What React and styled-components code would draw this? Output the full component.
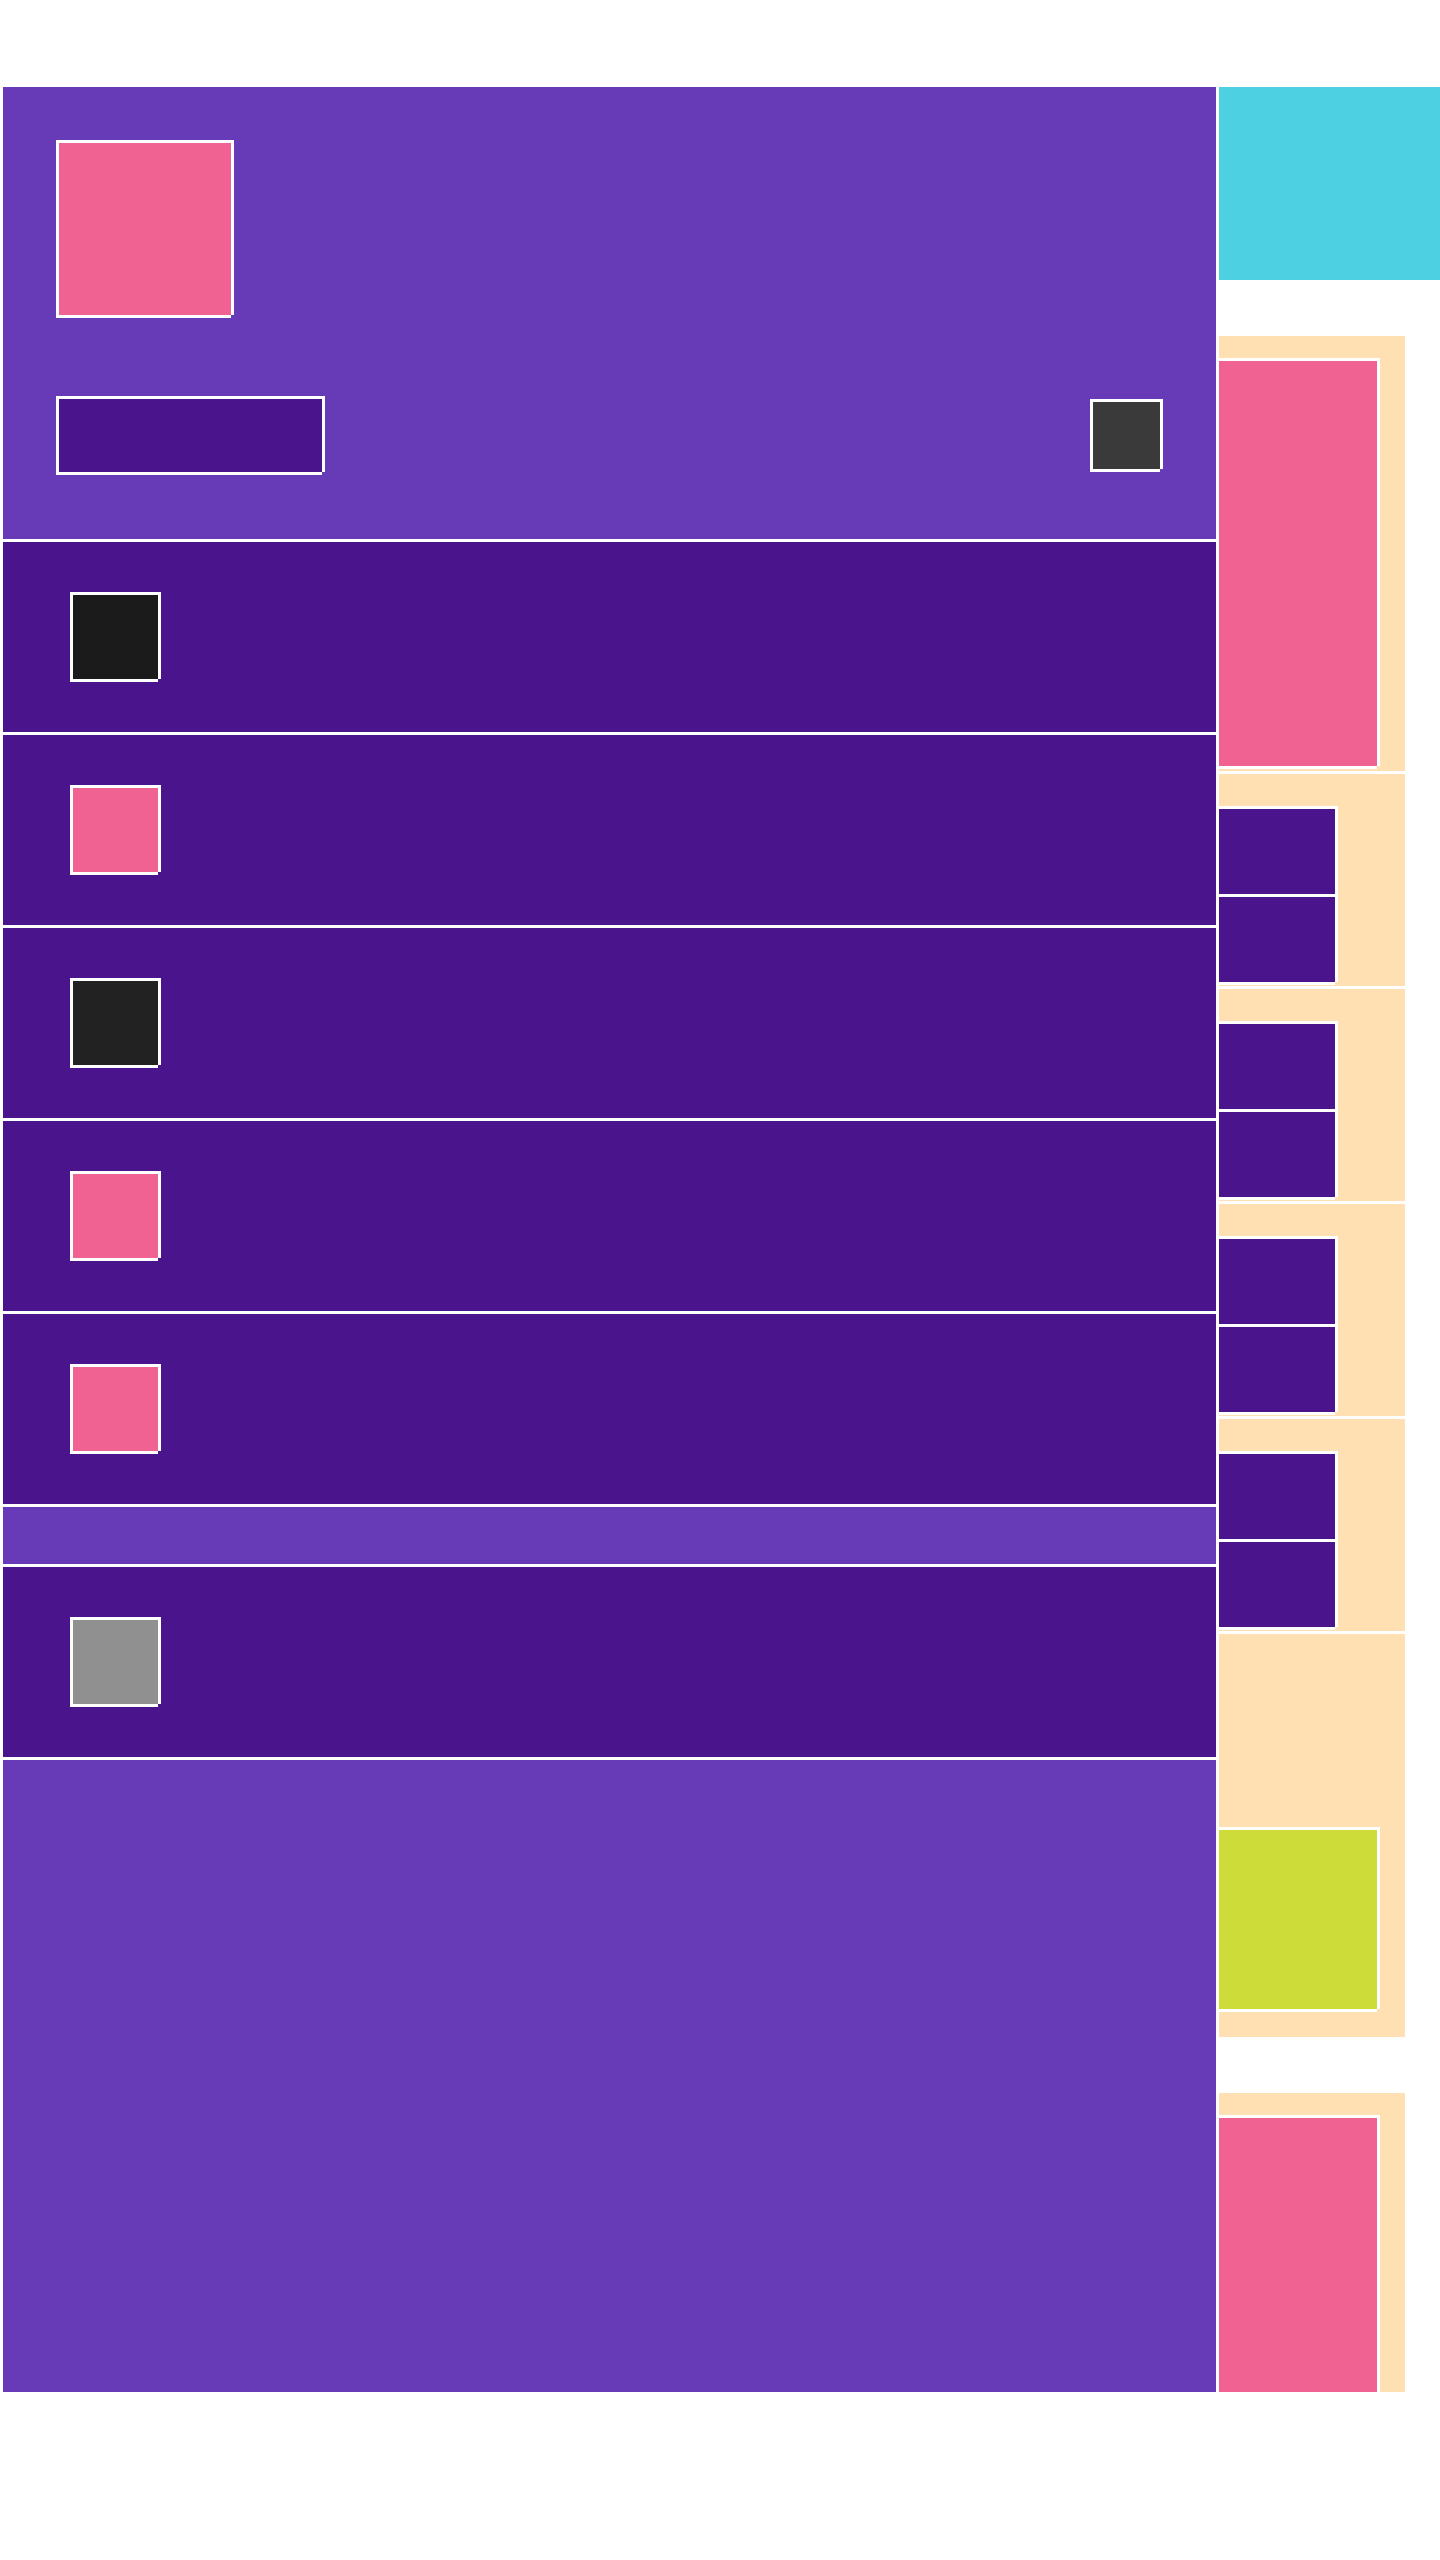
import styled, { createGlobalStyle } from "styled-components";

const GlobalStyle = createGlobalStyle`
  body {
    margin: 0;
    background: #ffffff;
    font-family: "Liberation Sans", Arial, sans-serif;
  }
`;

// the white frame on every tile misses its last 3px at the bottom right
const cutCorner = `
  clip-path: polygon(
    0 0, 100% 0, 100% calc(100% - 3px),
    calc(100% - 3px) calc(100% - 3px),
    calc(100% - 3px) 100%, 0 100%
  );
`;

const Page = styled.div`
  display: flex;
  gap: 3px;
  padding: 87px 0 0 3px;
  height: 2305px;
  overflow: hidden;
`;

const Main = styled.main`
  width: 1213px;
  flex-shrink: 0;
  display: flex;
  flex-direction: column;
  gap: 3px;
`;

const Header = styled.header`
  height: 452px;
  flex-shrink: 0;
  box-sizing: border-box;
  padding: 53px 53px 64px;
  background: #673ab7;
  display: flex;
  flex-direction: column;
  gap: 78px;
`;

const Tile = styled.div`
  box-sizing: border-box;
  flex-shrink: 0;
  width: ${(p) => p.$w}px;
  height: ${(p) => p.$h}px;
  background: ${(p) => p.$bg};
  border: 3px solid #ffffff;
  ${(p) => (p.$flush ? "border-left: none;" : "")}
  ${cutCorner}
`;

const Toolbar = styled.div`
  display: flex;
  align-items: center;
  justify-content: space-between;
`;

const Row = styled.div`
  height: 190px;
  flex-shrink: 0;
  box-sizing: border-box;
  padding-left: 67px;
  background: #4a148c;
  display: flex;
  align-items: center;
`;

const Band = styled.div`
  height: ${(p) => p.$h}px;
  flex: ${(p) => (p.$grow ? 1 : "none")};
  background: #673ab7;
`;

const Side = styled.aside`
  width: 221px;
  flex-shrink: 0;
  display: flex;
  flex-direction: column;
  align-items: flex-start;
`;

const Banner = styled.div`
  width: 221px;
  height: 193px;
  flex-shrink: 0;
  background: #4dd0e1;
`;

const Card = styled.section`
  width: 186px;
  height: ${(p) => p.$h}px;
  box-sizing: border-box;
  flex-shrink: 0;
  margin-top: ${(p) => p.$gap}px;
  padding-top: ${(p) => p.$top}px;
  background: #ffe0b2;
`;

const Stack = styled.div`
  box-sizing: border-box;
  width: 119px;
  height: 179px;
  background: #ffffff;
  border: 3px solid #ffffff;
  border-left: none;
  display: flex;
  flex-direction: column;
  gap: 3px;
  ${cutCorner}
`;

const StackItem = styled.div`
  flex: 1;
  background: #4a148c;
`;

const rows = ["#1b1b1b", "#f06292", "#222222", "#f06292", "#f06292"];

export default function App() {
  return (
    <>
      <GlobalStyle />
      <Page>
        <Main>
          <Header>
            <Tile $w={178} $h={178} $bg="#f06292" />
            <Toolbar>
              <Tile $w={269} $h={79} $bg="#4a148c" />
              <Tile $w={73} $h={73} $bg="#3a3a3a" />
            </Toolbar>
          </Header>
          {rows.map((c, i) => (
            <Row key={i}>
              <Tile $w={91} $h={90} $bg={c} />
            </Row>
          ))}
          <Band $h={57} />
          <Row>
            <Tile $w={91} $h={90} $bg="#909090" />
          </Row>
          <Band $grow />
        </Main>
        <Side>
          <Banner />
          <Card $h={435} $gap={56} $top={22}>
            <Tile $flush $w={161} $h={411} $bg="#f06292" />
          </Card>
          {[0, 1, 2, 3].map((i) => (
            <Card key={i} $h={212} $gap={3} $top={32}>
              <Stack>
                <StackItem />
                <StackItem />
              </Stack>
            </Card>
          ))}
          <Card $h={403} $gap={3} $top={193}>
            <Tile $flush $w={161} $h={185} $bg="#cddc39" />
          </Card>
          <Card $h={435} $gap={56} $top={22}>
            <Tile $flush $w={161} $h={411} $bg="#f06292" />
          </Card>
        </Side>
      </Page>
    </>
  );
}
